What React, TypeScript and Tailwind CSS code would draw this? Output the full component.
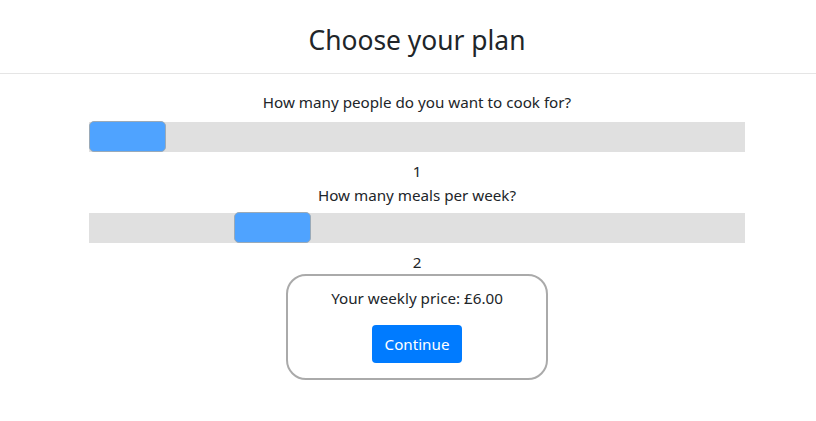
import React from 'react';

const font = { fontFamily: '"Segoe UI", "Noto Sans", "Open Sans", sans-serif' };

function Slider({ value, min, max }: { value: number; min: number; max: number }) {
  const pct = (value - min) / (max - min);
  return (
    <div className="relative h-[30px] w-[656px] bg-[#e0e0e0]">
      <div
        className="absolute top-[-1px] h-[31px] w-[77px] rounded-[5px] border border-[#9aaab8] bg-[#4fa3ff]"
        style={{ left: `${pct * (656 - 77)}px` }}
      />
    </div>
  );
}

export default function App() {
  return (
    <div className="min-h-screen bg-white text-[#212529]" style={font}>
      <header className="h-[74px] border-b border-[#e5e5e5] pl-[18px]">
        <h1 className="pt-[23px] text-center text-[26.4px] leading-[34px] font-normal">Choose your plan</h1>
      </header>
      <main className="flex flex-col items-center pl-[18px] text-[15.2px] leading-[24px]">
        <p className="mt-[16px]">How many people do you want to cook for?</p>
        <div className="mt-[8px]">
          <Slider value={1} min={1} max={5} />
        </div>
        <p className="mt-[7px]">1</p>
        <p>How many meals per week?</p>
        <div className="mt-[6px]">
          <Slider value={2} min={1} max={5} />
        </div>
        <p className="mt-[7px]">2</p>
        <div className="flex w-[262px] flex-col items-center rounded-[20px] border-2 border-[#aaaaaa] pt-[10px] pb-[15px]">
          <p>Your weekly price: £6.00</p>
          <button className="mt-[15px] h-[38px] w-[90px] rounded-[4px] bg-[#007bff] text-white">Continue</button>
        </div>
      </main>
    </div>
  );
}
